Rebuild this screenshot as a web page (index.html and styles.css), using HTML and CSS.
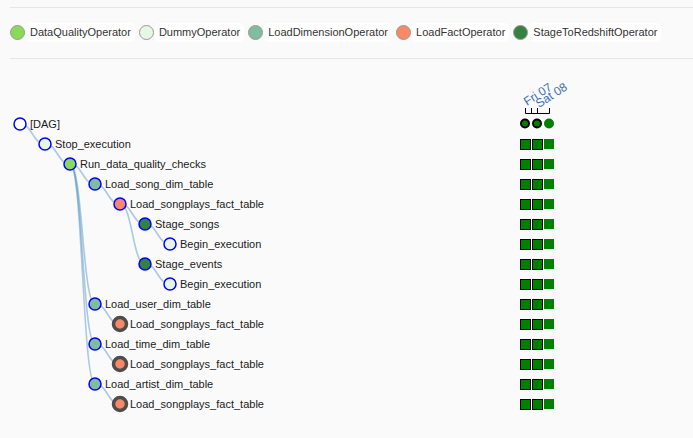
FILE: index.html
```html
<!DOCTYPE html>
<html>
<head>
<meta charset="utf-8">
<title>Tree view</title>
<link rel="stylesheet" href="styles.css">
</head>
<body>
<div class="page">
  <div class="rule rule-top"></div>
  <div class="legend">
    <div class="legend-item"><span class="dot op-dq"></span><span class="pill">DataQualityOperator</span></div>
    <div class="legend-item"><span class="dot op-dummy"></span><span class="pill">DummyOperator</span></div>
    <div class="legend-item"><span class="dot op-dim"></span><span class="pill">LoadDimensionOperator</span></div>
    <div class="legend-item"><span class="dot op-fact"></span><span class="pill">LoadFactOperator</span></div>
    <div class="legend-item"><span class="dot op-stage"></span><span class="pill">StageToRedshiftOperator</span></div>
  </div>
  <div class="rule rule-bottom"></div>
</div>
<svg class="tree" width="693" height="379" viewBox="0 59 693 379" xmlns="http://www.w3.org/2000/svg">
  <g class="links">
    <path d="M20,124 C32.5,124 32.5,144 45,144"/>
    <path d="M45,144 C57.5,144 57.5,164 70,164"/>
    <path d="M70,164 C82.5,164 82.5,184 95,184"/>
    <path d="M70,164 C82.5,164 82.5,304 95,304"/>
    <path d="M70,164 C82.5,164 82.5,344 95,344"/>
    <path d="M70,164 C82.5,164 82.5,384 95,384"/>
    <path d="M95,184 C107.5,184 107.5,204 120,204"/>
    <path d="M120,204 C132.5,204 132.5,224 145,224"/>
    <path d="M120,204 C132.5,204 132.5,264 145,264"/>
    <path d="M145,224 C157.5,224 157.5,244 170,244"/>
    <path d="M145,264 C157.5,264 157.5,284 170,284"/>
    <path d="M95,304 C107.5,304 107.5,324 120,324"/>
    <path d="M95,344 C107.5,344 107.5,364 120,364"/>
    <path d="M95,384 C107.5,384 107.5,404 120,404"/>
  </g>
  <g class="nodes">
    <circle class="node n-dag" cx="20" cy="124" r="6"/>
    <circle class="node op-dummy" cx="45" cy="144" r="6"/>
    <circle class="node op-dq" cx="70" cy="164" r="6"/>
    <circle class="node op-dim" cx="95" cy="184" r="6"/>
    <circle class="node op-fact" cx="120" cy="204" r="6"/>
    <circle class="node op-stage" cx="145" cy="224" r="6"/>
    <circle class="node op-dummy" cx="170" cy="244" r="6"/>
    <circle class="node op-stage" cx="145" cy="264" r="6"/>
    <circle class="node op-dummy" cx="170" cy="284" r="6"/>
    <circle class="node op-dim" cx="95" cy="304" r="6"/>
    <circle class="node-dup op-fact" cx="120" cy="324" r="6.5"/>
    <circle class="node op-dim" cx="95" cy="344" r="6"/>
    <circle class="node-dup op-fact" cx="120" cy="364" r="6.5"/>
    <circle class="node op-dim" cx="95" cy="384" r="6"/>
    <circle class="node-dup op-fact" cx="120" cy="404" r="6.5"/>
  </g>
  <g class="labels">
    <text x="30" y="124" dy=".35em">[DAG]</text>
    <text x="55" y="144" dy=".35em">Stop_execution</text>
    <text x="80" y="164" dy=".35em">Run_data_quality_checks</text>
    <text x="105" y="184" dy=".35em">Load_song_dim_table</text>
    <text x="130" y="204" dy=".35em">Load_songplays_fact_table</text>
    <text x="155" y="224" dy=".35em">Stage_songs</text>
    <text x="180" y="244" dy=".35em">Begin_execution</text>
    <text x="155" y="264" dy=".35em">Stage_events</text>
    <text x="180" y="284" dy=".35em">Begin_execution</text>
    <text x="105" y="304" dy=".35em">Load_user_dim_table</text>
    <text x="130" y="324" dy=".35em">Load_songplays_fact_table</text>
    <text x="105" y="344" dy=".35em">Load_time_dim_table</text>
    <text x="130" y="364" dy=".35em">Load_songplays_fact_table</text>
    <text x="105" y="384" dy=".35em">Load_artist_dim_table</text>
    <text x="130" y="404" dy=".35em">Load_songplays_fact_table</text>
  </g>
  <g class="axis">
    <path class="axis-line" d="M525.5,108 V113.5 H549.5 V108 M531.5,113.5 V108 M537.5,113.5 V108"/>
    <text class="date" transform="translate(527,106) rotate(-33)">Fri 07</text>
    <text class="date" transform="translate(539,108) rotate(-33)">Sat 08</text>
  </g>
  <g class="runs">
    <circle class="run run-done" cx="525" cy="123.5" r="4"/>
    <circle class="run run-done" cx="537" cy="123.5" r="4"/>
    <circle class="run" cx="549" cy="123.5" r="5"/>
  </g>
  <g class="squares">
    <rect class="sq sq-b" x="520.5" y="139.5" width="10" height="10"/><rect class="sq sq-b" x="532.5" y="139.5" width="10" height="10"/><rect class="sq" x="544" y="139" width="10" height="10"/>
    <rect class="sq sq-b" x="520.5" y="159.5" width="10" height="10"/><rect class="sq sq-b" x="532.5" y="159.5" width="10" height="10"/><rect class="sq" x="544" y="159" width="10" height="10"/>
    <rect class="sq sq-b" x="520.5" y="179.5" width="10" height="10"/><rect class="sq sq-b" x="532.5" y="179.5" width="10" height="10"/><rect class="sq" x="544" y="179" width="10" height="10"/>
    <rect class="sq sq-b" x="520.5" y="199.5" width="10" height="10"/><rect class="sq sq-b" x="532.5" y="199.5" width="10" height="10"/><rect class="sq" x="544" y="199" width="10" height="10"/>
    <rect class="sq sq-b" x="520.5" y="219.5" width="10" height="10"/><rect class="sq sq-b" x="532.5" y="219.5" width="10" height="10"/><rect class="sq" x="544" y="219" width="10" height="10"/>
    <rect class="sq sq-b" x="520.5" y="239.5" width="10" height="10"/><rect class="sq sq-b" x="532.5" y="239.5" width="10" height="10"/><rect class="sq" x="544" y="239" width="10" height="10"/>
    <rect class="sq sq-b" x="520.5" y="259.5" width="10" height="10"/><rect class="sq sq-b" x="532.5" y="259.5" width="10" height="10"/><rect class="sq" x="544" y="259" width="10" height="10"/>
    <rect class="sq sq-b" x="520.5" y="279.5" width="10" height="10"/><rect class="sq sq-b" x="532.5" y="279.5" width="10" height="10"/><rect class="sq" x="544" y="279" width="10" height="10"/>
    <rect class="sq sq-b" x="520.5" y="299.5" width="10" height="10"/><rect class="sq sq-b" x="532.5" y="299.5" width="10" height="10"/><rect class="sq" x="544" y="299" width="10" height="10"/>
    <rect class="sq sq-b" x="520.5" y="319.5" width="10" height="10"/><rect class="sq sq-b" x="532.5" y="319.5" width="10" height="10"/><rect class="sq" x="544" y="319" width="10" height="10"/>
    <rect class="sq sq-b" x="520.5" y="339.5" width="10" height="10"/><rect class="sq sq-b" x="532.5" y="339.5" width="10" height="10"/><rect class="sq" x="544" y="339" width="10" height="10"/>
    <rect class="sq sq-b" x="520.5" y="359.5" width="10" height="10"/><rect class="sq sq-b" x="532.5" y="359.5" width="10" height="10"/><rect class="sq" x="544" y="359" width="10" height="10"/>
    <rect class="sq sq-b" x="520.5" y="379.5" width="10" height="10"/><rect class="sq sq-b" x="532.5" y="379.5" width="10" height="10"/><rect class="sq" x="544" y="379" width="10" height="10"/>
    <rect class="sq sq-b" x="520.5" y="399.5" width="10" height="10"/><rect class="sq sq-b" x="532.5" y="399.5" width="10" height="10"/><rect class="sq" x="544" y="399" width="10" height="10"/>
  </g>
</svg>
</body>
</html>
```
FILE: styles.css
```css
html, body {
  margin: 0;
  padding: 0;
  background: #fafafa;
  font-family: "Liberation Sans", Arial, sans-serif;
  font-size: 11px;
  color: #333;
  overflow: hidden;
}

.page {
  padding-left: 10px;
}

.rule {
  height: 0;
  border-top: 1px solid #e6e6e6;
}

.rule-top {
  margin-top: 7px;
}

.rule-bottom {
  margin-top: 16px;
}

.legend {
  display: flex;
  align-items: center;
  gap: 4px;
  margin-top: 15px;
  height: 19px;
}

.legend-item {
  display: flex;
  align-items: center;
  gap: 1px;
}

.dot {
  display: block;
  width: 13px;
  height: 13px;
  border: 1px solid #999;
  border-radius: 50%;
}

.pill {
  display: block;
  height: 19px;
  line-height: 19px;
  padding: 0 4px;
  background: #fff;
  border-radius: 5px;
  white-space: nowrap;
}

.op-dq { background: #89da59; fill: #89da59; }
.op-dummy { background: #e8f7e4; fill: #e8f7e4; }
.op-dim { background: #80bd9e; fill: #80bd9e; }
.op-fact { background: #f98866; fill: #f98866; }
.op-stage { background: #358140; fill: #358140; }

.tree {
  display: block;
}

.links path {
  fill: none;
  stroke: #3182bd;
  stroke-width: 1.6px;
  opacity: 0.4;
}

.node {
  stroke: #0000ff;
  stroke-width: 1.5px;
}

.n-dag {
  fill: #fff;
}

.node-dup {
  stroke: #4d4d4d;
  stroke-width: 3.5px;
}

.labels text {
  font-family: "Liberation Sans", Arial, sans-serif;
  font-size: 11px;
  fill: #1a1a1a;
}

.axis-line {
  fill: none;
  stroke: #000;
  stroke-width: 1px;
}

.date {
  font-family: "Liberation Sans", Arial, sans-serif;
  font-size: 12px;
  fill: #3a6fb5;
}

.run {
  fill: #008000;
}

.run-done {
  stroke: #000;
  stroke-width: 2px;
}

.sq {
  fill: #008000;
}

.sq-b {
  stroke: #000;
  stroke-width: 1px;
}
```
